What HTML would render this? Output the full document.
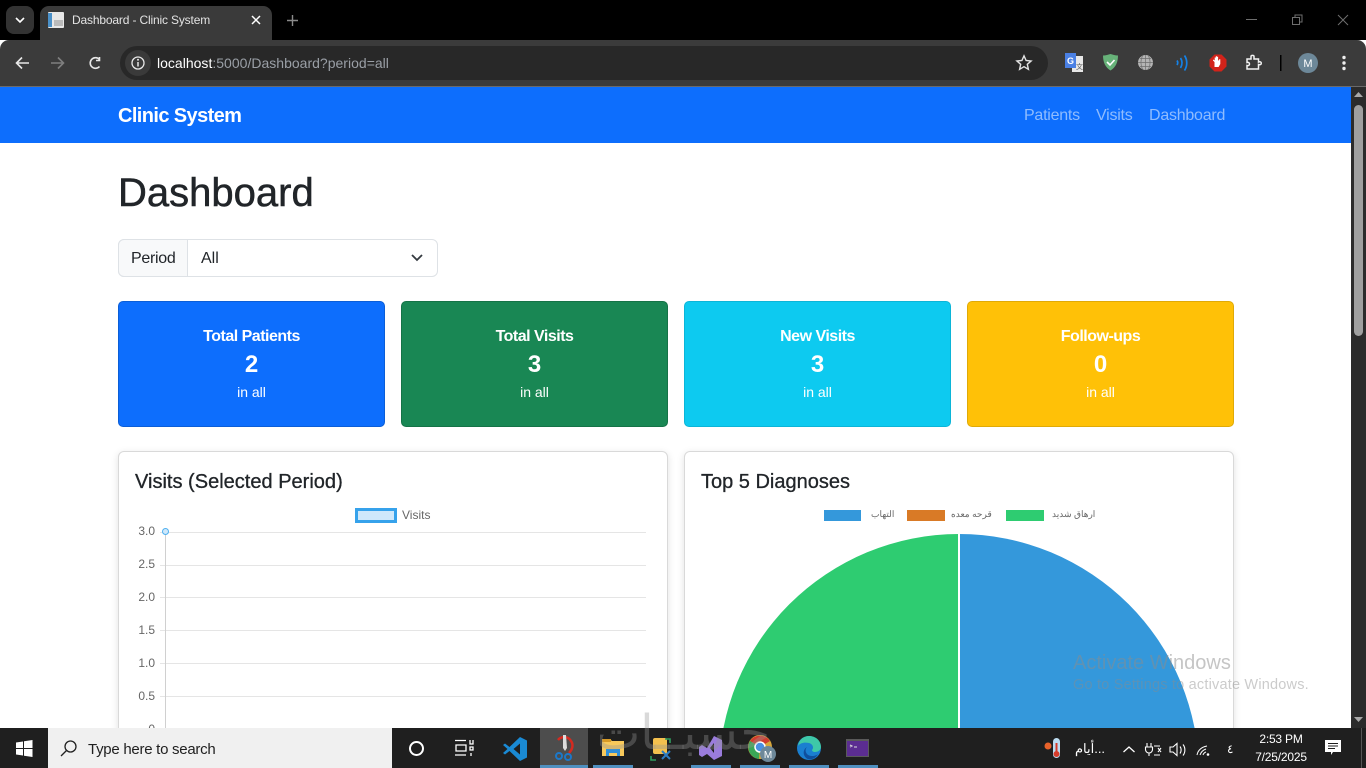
<!DOCTYPE html>
<html lang="en"><head><meta charset="utf-8"><title>Dashboard - Clinic System</title>
<style>
html,body{margin:0;padding:0;width:1366px;height:768px;overflow:hidden;background:#fff;font-family:"Liberation Sans",sans-serif}
div,span{position:absolute;white-space:nowrap;box-sizing:border-box}
.c{text-align:center}
.card{border-radius:5px;top:301px;width:267px;height:126px;color:#fff}
.card .t{left:0;width:100%;top:25px;font-size:16px;font-weight:bold;line-height:20px;text-align:center;letter-spacing:-.5px}
.card .n{left:0;width:100%;top:49px;font-size:24px;font-weight:bold;line-height:28px;text-align:center}
.card .s{left:0;width:100%;top:81px;font-size:14px;line-height:18px;text-align:center}
.panel{top:451px;width:550px;height:300px;background:#fff;border:1px solid #d9d9d9;border-radius:6px;box-shadow:0 2px 8px rgba(0,0,0,.12)}
.yl{font-size:12px;color:#666;width:30px;text-align:right;left:125px;line-height:14px}
.gl{left:160px;width:486px;height:1px;background:#e5e5e5}
.nav{font-size:16px;color:#8fbcfe;top:106px;line-height:20px;letter-spacing:-.24px}
.ul{height:3px;top:765px;background:#4f8fbf}
</style></head><body>

<!-- browser chrome -->
<div style="left:0;top:0;width:1366px;height:40px;background:#000"></div>
<div style="left:6px;top:6px;width:28px;height:28px;background:#333;border-radius:8px"></div>
<svg style="position:absolute;left:14px;top:15px" width="12" height="10"><path d="M2 3l4 4 4-4" fill="none" stroke="#fff" stroke-width="1.6"/></svg>
<div style="left:40px;top:6px;width:232px;height:36px;background:#3a3a3a;border-radius:9px 9px 0 0"></div>
<svg style="position:absolute;left:48px;top:12px" width="16" height="16"><rect width="16" height="16" rx="1" fill="#e8e8e8"/><rect x="0" y="1" width="4" height="14" fill="#4a90c8"/><rect x="6" y="8" width="9" height="6" fill="#bbb"/></svg>
<div style="left:72px;top:12px;font-size:12px;line-height:16px;color:#e3e3e3;letter-spacing:-.16px">Dashboard - Clinic System</div>
<svg style="position:absolute;left:250px;top:14px" width="12" height="12"><path d="M2 2l8 8M10 2l-8 8" stroke="#fff" stroke-width="1.5"/></svg>
<svg style="position:absolute;left:286px;top:14px" width="13" height="13"><path d="M6.500 1v11M1 6.500h11" stroke="#8a8a8a" stroke-width="1.4"/></svg>
<svg style="position:absolute;left:1240px;top:10px" width="120" height="20" fill="none" stroke="#6e6e6e"><path d="M6 9.500h11"/><path d="M52.500 7.500h7v7h-7zM55 7.500v-2.500h7v7h-2.500"/><path d="M98 5l10 10M108 5l-10 10"/></svg>

<div style="left:0;top:40px;width:1366px;height:46px;background:#3b3b3b;border-radius:9px 9px 0 0"></div>
<div style="left:0;top:86px;width:1366px;height:1px;background:#6a6a6a"></div>
<svg style="position:absolute;left:14px;top:55px" width="100" height="16" fill="none" stroke-width="1.600"><path d="M15 8H3M8 2.500L2.500 8 8 13.500" stroke="#e8e8e8"/><path d="M37 8h12M44 2.500L49.500 8 44 13.500" stroke="#7f7f7f"/><path d="M85.500 4.500A5.300 5.300 0 1 0 85.500 11.500M85.500 2v3.500H82" stroke="#e8e8e8"/></svg>
<div style="left:120px;top:46px;width:928px;height:34px;background:#282828;border-radius:17px"></div>
<div style="left:125px;top:50px;width:26px;height:26px;background:#3a3a3a;border-radius:13px"></div>
<svg style="position:absolute;left:130px;top:55px" width="16" height="16" fill="none"><circle cx="8" cy="8" r="6" stroke="#e8e8e8" stroke-width="1.300"/><path d="M8 7v4.500" stroke="#e8e8e8" stroke-width="1.500"/><circle cx="8" cy="4.800" r="1" fill="#e8e8e8"/></svg>
<div style="left:157px;top:55px;font-size:14px;line-height:17px;color:#fff;letter-spacing:.01px">localhost<span style="position:static;color:#9a9fa6">:5000/Dashboard?period=all</span></div>
<svg style="position:absolute;left:1015px;top:54px" width="18" height="18"><path d="M9 1.800l2.100 4.700 5 .5-3.800 3.300 1.100 5L9 12.700l-4.400 2.600 1.100-5L1.900 7l5-.5z" fill="none" stroke="#e3e3e3" stroke-width="1.400"/></svg>
<svg style="position:absolute;left:1064px;top:52px" width="290" height="24">
<rect x="8" y="4" width="11" height="16" fill="#e8e8e8"/><rect x="1" y="1" width="11" height="15" fill="#4a80e4"/><text x="3" y="12" font-size="9" font-weight="bold" fill="#fff" font-family="Liberation Sans">G</text><text x="12" y="17" font-size="7" fill="#555" font-family="Liberation Sans">文</text>
<g transform="translate(-7 0)"><path d="M46 3.500c3 0 5-1 7.500-1.500 2.500.5 4.500 1.500 7.500 1.500 0 7-2.500 12-7.500 15-5-3-7.500-8-7.500-15z" fill="#67b279"/><path d="M50 10l3 3 4.500-5" fill="none" stroke="#fff" stroke-width="1.600"/></g>
<circle cx="81.500" cy="10.500" r="7.500" fill="#b5b5b5"/><path d="M74 10.500h15M81.500 3v15M76 6.500h11M76 14.500h11M78.500 3.800c-2 4-2 9 0 13.500M84.500 3.800c2 4 2 9 0 13.500" stroke="#6e6e6e" stroke-width=".7" fill="none"/>
<path d="M113 8.500c1 1.500 1 3 0 4.500M116.500 6c2 3 2 6.500 0 10M120.500 3.500c3 4.500 3 10.500 0 15" fill="none" stroke="#1482e8" stroke-width="1.700"/>
<path d="M150.500 2.500h7l5 5v7l-5 5h-7l-5-5v-7z" fill="#d2231a"/><path d="M150.500 15v-5l-1.500-1.500v-1l1.700.9V5.500h1.100V8V4.200h1.200V8V4.800h1.100V9l1.200-1.700h1V12l-1.700 3z" fill="#fff"/>
<path d="M183 7h4V4.500c0-1.500 3-1.500 3 0V7h4.500v3c2-.8 2.800.3 2.800 1.200s-1 2-2.800 1.300v4.500H183v-3.500c1.500.5 2.500-.3 2.500-1.500s-1-2-2.500-1.500z" fill="none" stroke="#f2f2f2" stroke-width="1.500"/>
<rect x="216" y="3" width="1.500" height="16" fill="#000"/>
<circle cx="244" cy="11" r="10" fill="#6d8899"/><text x="244" y="15" text-anchor="middle" font-size="11" fill="#fff" font-family="Liberation Sans">M</text>
<circle cx="280" cy="5.500" r="1.700" fill="#eee"/><circle cx="280" cy="11" r="1.700" fill="#eee"/><circle cx="280" cy="16.500" r="1.700" fill="#eee"/>
</svg>

<!-- navbar -->
<div style="left:0;top:87px;width:1351px;height:56px;background:#0d6efd"></div>
<div style="left:118px;top:104px;font-size:20px;font-weight:bold;color:#fff;line-height:24px;letter-spacing:-.6px">Clinic System</div>
<div class="nav" style="left:1024px">Patients</div>
<div class="nav" style="left:1096px">Visits</div>
<div class="nav" style="left:1149px">Dashboard</div>

<!-- heading -->
<div style="left:118px;top:169px;font-size:40px;color:#212529;line-height:48px;letter-spacing:0;-webkit-text-stroke:.5px #212529">Dashboard</div>

<!-- period select -->
<div style="left:118px;top:239px;width:320px;height:38px;border:1px solid #dee2e6;border-radius:6px;background:#fff"></div>
<div style="left:118px;top:239px;width:70px;height:38px;border:1px solid #dee2e6;border-radius:6px 0 0 6px;background:#f8f9fa"></div>
<div style="left:131px;top:249px;font-size:16px;line-height:19px;color:#212529;letter-spacing:-.3px">Period</div>
<div style="left:201px;top:249px;font-size:16px;line-height:19px;color:#212529">All</div>
<svg style="position:absolute;left:410px;top:252px" width="14" height="12"><path d="M2 3l5 5 5-5" fill="none" stroke="#343a40" stroke-width="1.800"/></svg>

<!-- stat cards -->
<div class="card" style="left:118px;background:#0d6efd;border:1px solid #0b5ed7"><div class="t">Total Patients</div><div class="n">2</div><div class="s">in all</div></div>
<div class="card" style="left:401px;background:#198754;border:1px solid #157347"><div class="t">Total Visits</div><div class="n">3</div><div class="s">in all</div></div>
<div class="card" style="left:684px;background:#0dcaf0;border:1px solid #0bb5d8"><div class="t">New Visits</div><div class="n">3</div><div class="s">in all</div></div>
<div class="card" style="left:967px;background:#ffc107;border:1px solid #e0aa06"><div class="t">Follow-ups</div><div class="n">0</div><div class="s">in all</div></div>

<!-- chart panels -->
<div class="panel" style="left:118px"></div>
<div class="panel" style="left:684px"></div>
<div style="left:135px;top:470px;font-size:20px;line-height:24px;color:#212529;letter-spacing:.01px;-webkit-text-stroke:.3px #212529">Visits (Selected Period)</div>
<div style="left:701px;top:470px;font-size:20px;line-height:24px;color:#212529;letter-spacing:0;-webkit-text-stroke:.3px #212529">Top 5 Diagnoses</div>

<div style="left:355px;top:508px;width:42px;height:15px;background:#cfe8fb;border:3px solid #36a2eb"></div>
<div style="left:402px;top:508px;font-size:12px;line-height:14px;color:#666">Visits</div>

<div class="gl" style="top:532px"></div><div class="gl" style="top:565px"></div><div class="gl" style="top:597px"></div><div class="gl" style="top:630px"></div><div class="gl" style="top:663px"></div><div class="gl" style="top:696px"></div>
<div style="left:165px;top:532px;width:1px;height:200px;background:#d0d0d0"></div>
<div class="yl" style="top:524px">3.0</div><div class="yl" style="top:557px">2.5</div><div class="yl" style="top:590px">2.0</div><div class="yl" style="top:623px">1.5</div><div class="yl" style="top:656px">1.0</div><div class="yl" style="top:689px">0.5</div><div class="yl" style="top:722px">0</div>
<div style="left:162px;top:528px;width:7px;height:7px;border:1.500px solid #4fb0ef;border-radius:50%;background:#cfe8fb"></div>

<div style="left:824px;top:510px;width:37px;height:11px;background:#3498db"></div>
<div style="left:871px;top:507px;width:24px;font-size:9px;line-height:14px;color:#666;font-family:'Liberation Sans','Noto Sans CJK SC',sans-serif">التهاب</div>
<div style="left:907px;top:510px;width:38px;height:11px;background:#d97a26"></div>
<div style="left:951px;top:507px;width:44px;font-size:9px;line-height:14px;color:#666;font-family:'Liberation Sans','Noto Sans CJK SC',sans-serif">قرحه معده</div>
<div style="left:1006px;top:510px;width:38px;height:11px;background:#2ecc71"></div>
<div style="left:1052px;top:507px;width:46px;font-size:9px;line-height:14px;color:#666;font-family:'Liberation Sans','Noto Sans CJK SC',sans-serif">ارهاق شديد</div>

<svg style="position:absolute;left:700px;top:530px" width="520" height="200">
<path d="M259 244V4A240 240 0 0 1 499 244z" fill="#3498db"/>
<path d="M259 244V4A240 240 0 0 0 19 244z" fill="#2ecc71"/>
<path d="M259 4V200" stroke="#fff" stroke-width="2"/>
</svg>

<!-- scrollbar -->
<div style="left:1351px;top:87px;width:15px;height:641px;background:#2b2b2b"></div>
<div style="left:1354px;top:105px;width:9px;height:231px;background:#9f9f9f;border-radius:5px"></div>
<svg style="position:absolute;left:1351px;top:90px" width="15" height="10"><path d="M3 7l4.500-5L12 7z" fill="#a8a8a8"/></svg>
<svg style="position:absolute;left:1351px;top:714px" width="15" height="10"><path d="M3 3l4.500 5L12 3z" fill="#a8a8a8"/></svg>

<!-- activate windows -->
<div style="left:1073px;top:651px;font-size:20px;line-height:24px;color:rgba(140,140,140,.5)">Activate Windows</div>
<div style="left:1073px;top:676px;font-size:14.500px;line-height:18px;letter-spacing:.2px;color:rgba(140,140,140,.45)">Go to Settings to activate Windows.</div>

<!-- taskbar -->
<div style="left:0;top:728px;width:1366px;height:40px;background:#1f1f1f"></div>
<svg style="position:absolute;left:16px;top:740px" width="17" height="17" fill="#fff"><path d="M0 2.500l7-1v6.500H0zM8 1.300L16.500 0v8H8zM0 9h7v6.500l-7-1zM8 9h8.500v8L8 15.700z"/></svg>
<div style="left:48px;top:728px;width:344px;height:40px;background:#f0f0f0"></div>
<svg style="position:absolute;left:59px;top:739px" width="20" height="20" fill="none" stroke="#222" stroke-width="1.300"><circle cx="11.500" cy="7.500" r="5.500"/><path d="M7.500 11.500L2 17"/></svg>
<div style="left:88px;top:741px;font-size:15px;line-height:18px;color:#1f1f1f;letter-spacing:-.27px">Type here to search</div>
<svg style="position:absolute;left:408px;top:740px" width="18" height="18"><circle cx="8.500" cy="8.500" r="6.500" fill="none" stroke="#fff" stroke-width="2"/></svg>
<svg style="position:absolute;left:454px;top:739px" width="20" height="18" fill="none" stroke="#fff" stroke-width="1.300"><path d="M1 1.500h11M1 16h11M2 6h10v6H2zM16 1v4h3V1M16 8h3v3h-3zM17 14v3"/></svg>
<svg style="position:absolute;left:502px;top:736px" width="26" height="26"><path d="M18 1l7 3.500v17L18 25 7.500 15 3 18.500 1 17l4.500-4L1 9l2-1.500L7.500 11zM18 7.500L11.500 13l6.500 5.500z" fill="#1a8ad4"/></svg>

<div style="left:540px;top:728px;width:48px;height:40px;background:#4d4d4d"></div>
<div class="ul" style="left:540px;width:48px"></div>
<div class="ul" style="left:593px;width:40px"></div>
<div class="ul" style="left:691px;width:40px"></div>
<div class="ul" style="left:740px;width:40px"></div>
<div class="ul" style="left:789px;width:40px"></div>
<div class="ul" style="left:838px;width:40px"></div>

<svg style="position:absolute;left:552px;top:734px" width="24" height="28"><path d="M6 6a8 8 0 0 1 13 1c3 4 1 9-2 12" fill="none" stroke="#d42a20" stroke-width="2.500"/><path d="M11 1h3l1 13-2 3-2-3z" fill="#ddd"/><circle cx="7" cy="22" r="3" fill="none" stroke="#1c78c9" stroke-width="2"/><circle cx="16" cy="23" r="3" fill="none" stroke="#1c78c9" stroke-width="2"/></svg>
<svg style="position:absolute;left:601px;top:738px" width="24" height="20"><path d="M1 1h8l2 2h12v15H1z" fill="#f8c95b"/><rect x="1" y="1" width="9" height="3" fill="#d79a27"/><path d="M5 11h14v7h-3v-3H8v3H5z" fill="#2f8fd8"/></svg>
<svg style="position:absolute;left:649px;top:736px" width="26" height="26"><rect x="4" y="2" width="14" height="16" rx="2" fill="#f4c04e"/><path d="M16 3h5v4M2 20v4h5" fill="none" stroke="#2f9e5f" stroke-width="1.600"/><path d="M13 15l8 8M21 15l-8 8" stroke="#2b7cc4" stroke-width="2"/></svg>
<svg style="position:absolute;left:698px;top:735px" width="26" height="26"><path d="M16 1l8 4v16l-8 4-7-6-5 3-3-2v-8l3-2 5 3zM16 8l-4 5 4 5z" fill="#9a7cdc" fill-rule="evenodd"/></svg>
<svg style="position:absolute;left:748px;top:735px" width="30" height="30"><circle cx="12" cy="12" r="12" fill="#d8a63a"/><path d="M12 12L2 6a12 12 0 0 1 20 0z" fill="#d13c2f"/><path d="M12 12L2 6a12 12 0 0 0 9 18z" fill="#3aa757"/><circle cx="12" cy="12" r="5" fill="#4a90e2" stroke="#fff" stroke-width="1.500"/><circle cx="20" cy="19" r="8" fill="#6d8899"/><text x="20" y="23" text-anchor="middle" font-size="10" fill="#fff" font-family="Liberation Sans">M</text></svg>
<svg style="position:absolute;left:796px;top:735px" width="26" height="26"><circle cx="13" cy="13" r="12" fill="#1a7fd0"/><path d="M2 11C3 4 8 1 13 1c7 0 12 5 12 11 0 3-3 5-6 5-2 0-3-1-3-2 2-2 1-6-3-7-5-1-9 0-11 3z" fill="#3ec8a8"/><path d="M11 12c-3 3-1 9 5 9 3 0 5-1 6-2-2 4-6 6-10 5-5-2-6-9-1-12z" fill="#0f4f9c"/></svg>
<svg style="position:absolute;left:846px;top:739px" width="24" height="20"><rect width="23" height="18" fill="#5a5a5a"/><rect x="1" y="2" width="21" height="15" fill="#5b2d91"/><path d="M4 6l2 1-2 1M8 8h3" stroke="#ddd" fill="none"/></svg>

<div style="left:600px;top:706px;font-size:48px;line-height:56px;color:rgba(150,150,150,.36);font-family:'Liberation Sans','Noto Sans CJK SC',sans-serif;direction:rtl;width:170px;overflow:hidden">حسبــات</div>

<!-- tray -->
<svg style="position:absolute;left:1043px;top:737px" width="24" height="24"><circle cx="5" cy="9" r="3.500" fill="#e8622a"/><rect x="10" y="1" width="7" height="20" rx="3.500" fill="#bcdcf0"/><rect x="12.500" y="6" width="2" height="12" fill="#d63b2a"/><circle cx="13.500" cy="17" r="3" fill="#d63b2a"/></svg>
<div style="left:1073px;top:740px;width:34px;font-size:13px;line-height:18px;color:#fff;text-align:center;font-family:'Liberation Sans','Noto Sans CJK SC',sans-serif">أيام...</div>
<svg style="position:absolute;left:1120px;top:740px" width="120" height="18" fill="none" stroke="#fff" stroke-width="1.100"><path d="M3.500 12l5.500-5 5.500 5" stroke-width="1.300"/><g transform="translate(-2 0)"><path d="M29 3v4M33 3v4M27.500 7h7v2.500a3.500 3.500 0 0 1-7 0zM31 13v3M36 6h6M36 15h6M40 8l3 4M43 8l-3 4"/></g><g transform="translate(-8 0)"><path d="M58 7h3l4-3.500v12L61 12h-3zM68 6.500c1.500 2 1.500 5 0 7M71 4.500c2.500 3 2.500 8 0 11"/></g><g transform="translate(-6 0)"><path d="M83 15c1-5 5-8 10-9M86 15c1-3 3-5 6-6M89 15c.5-1.500 1.500-2.500 3-3" stroke-width="1"/><circle cx="94" cy="14.500" r="1.300" fill="#fff" stroke="none"/></g></svg>
<div style="left:1227px;top:741px;font-size:12px;line-height:16px;color:#fff;font-family:'Liberation Sans','Noto Sans CJK SC',sans-serif">٤</div>
<div style="left:1249px;top:731px;width:64px;font-size:12px;line-height:16px;color:#fff;text-align:center;letter-spacing:-.2px">2:53 PM</div>
<div style="left:1249px;top:749px;width:64px;font-size:12px;line-height:16px;color:#fff;text-align:center;letter-spacing:-.2px">7/25/2025</div>
<svg style="position:absolute;left:1324px;top:739px" width="18" height="18"><path d="M1 1h16v12H9l-2 3v-3H1z" fill="#fff"/><path d="M4 4.500h10M4 7h10M4 9.500h7" stroke="#1f1f1f"/></svg>
<div style="left:1361px;top:728px;width:1px;height:40px;background:#555"></div>
</body></html>
